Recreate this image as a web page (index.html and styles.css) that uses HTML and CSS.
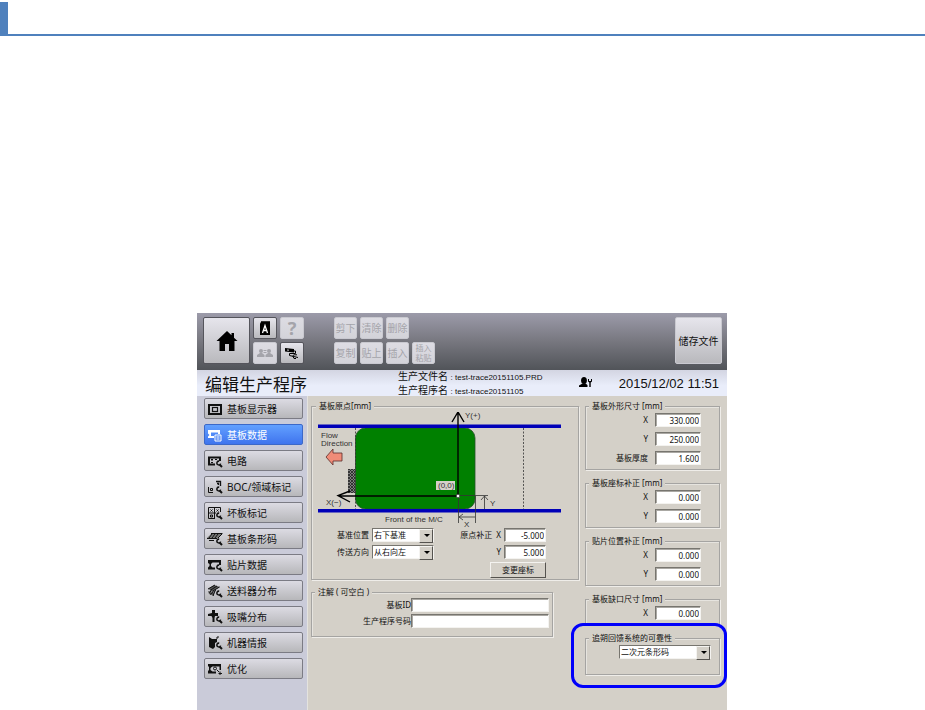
FILE: index.html
```html
<!DOCTYPE html>
<html lang="zh-CN">
<head>
<meta charset="utf-8">
<title>编辑生产程序</title>
<link rel="stylesheet" href="styles.css">
</head>
<body>
<svg class="defs" aria-hidden="true">
  <symbol id="wrench" viewBox="0 0 8 8"><path d="M4.200 1.200A1.900 1.900 0 1 0 5.600 3.600" fill="none" stroke="currentColor" stroke-width="1.500"/><path d="M4.500 4.500L7 7" stroke="currentColor" stroke-width="1.900"/></symbol>
</svg>
<header class="page-head"></header>
<main class="page">
  <div class="app">
    <div class="toolbar">
      <button class="btn home" aria-label="主页"><svg viewBox="0 0 22 22"><path d="M11 1L0.500 11H3.500V21H9V14H13V21H18.500V11H21.500L18 7.700V3H15.500V5.300Z" fill="#000"/></svg></button>
      <div class="icon-grid">
        <button class="btn" aria-label="语言"><svg viewBox="0 0 14 14"><path d="M3 0H12V2H3Z" fill="#333"/><path d="M2 2.500L3 1H12V14H2Z" fill="#000"/><path d="M4.500 12L7 4.500L9.500 12M5.300 9.500H8.700" fill="none" stroke="#fff" stroke-width="1.300"/></svg></button>
        <button class="btn off help" disabled>?</button>
        <button class="btn off" disabled aria-label="用户"><svg viewBox="0 0 16 14" fill="#a4a4aa"><circle cx="4" cy="5" r="2"/><path d="M0 11V9L3 7H5L7.500 9V11Z"/><circle cx="12" cy="5" r="2"/><path d="M8.500 11V9L11 7H13L16 9V11Z"/><path d="M6.500 4H9.500V5H6.500ZM6.500 6H9.500V7H6.500Z"/></svg></button>
        <button class="btn" aria-label="USB"><svg viewBox="0 0 16 14"><path d="M1 2L10 3V6.500L1 5.500Z" fill="#000"/><path d="M3 4L5 4.200" stroke="#ccc"/><path d="M10 5H11.500V7.500H5.500V9.500L14 11.500M8.500 10L10 8.800H13M9 10.500L10 12.500H12" fill="none" stroke="#000"/></svg></button>
      </div>
      <div class="edit-grid">
        <button class="btn off" disabled>剪下</button>
        <button class="btn off" disabled>清除</button>
        <button class="btn off" disabled>删除</button>
        <button class="btn off row2" disabled>复制</button>
        <button class="btn off" disabled>贴上</button>
        <button class="btn off" disabled>插入</button>
        <button class="btn off two-line" disabled>插入<br>粘贴</button>
      </div>
      <button class="btn save">储存文件</button>
    </div>

    <div class="titlebar">
      <h1>编辑生产程序</h1>
      <div class="file-info">
        <div>生产文件名 <span>: test-trace20151105.PRD</span></div>
        <div>生产程序名 <span>: test-trace20151105</span></div>
      </div>
      <svg class="user" viewBox="0 0 14 12"><ellipse cx="5" cy="3.500" rx="2.900" ry="3.500"/><path d="M0 10V8.500L3.500 6.500H6.500L8.500 8V10Z"/><path d="M9 2V4.500L10.300 5.500V10H11.700V5.500L13 4.500V2H12V4H10V2Z"/></svg>
      <time>2015/12/02 11:51</time>
    </div>

    <div class="body">
      <nav class="side">
        <button class="item"><svg viewBox="0 0 16 14"><path d="M2 3H14V12H2Z" fill="none" stroke="currentColor" stroke-width="2"/><rect x="5.500" y="5.500" width="5" height="4" fill="none" stroke="currentColor" stroke-width="1.200"/></svg>基板显示器</button>
        <button class="item current"><svg viewBox="0 0 16 14"><path d="M1 2H13V6H11V4.500H4V8H7V10H1V8.500L2.500 7L1 5.500Z" fill="currentColor"/><path d="M8 7H14V13H8ZM9.500 9H12.500M9.500 11H12.500" fill="none" stroke="currentColor"/></svg>基板数据</button>
        <button class="item"><svg viewBox="0 0 16 14"><path d="M8 10.500H2V3.500H13V7" fill="none" stroke="currentColor" stroke-width="2"/><path d="M4 5H6V6.500H4ZM4 8H6V9H4ZM8 5H10V6H8Z" fill="currentColor"/><use href="#wrench" x="8" y="6" width="8" height="8"/></svg>电路</button>
        <button class="item"><svg viewBox="0 0 16 14"><path d="M1.500 7V12.500H6M3.500 8.500H5.500V10.500H3.500Z" fill="none" stroke="currentColor"/><path d="M9 1.500H13.500V6M10 3.500H11.500V5" fill="none" stroke="currentColor" stroke-width="1.300"/><use href="#wrench" x="8" y="6" width="8" height="8"/></svg>BOC/领域标记</button>
        <button class="item"><svg viewBox="0 0 16 14"><path d="M8 12.500H1.500V1.500H13.500V6M1.500 7H9M7.500 1.500V12.500M3.500 3.500L5.500 5.500M5.500 3.500L3.500 5.500M9.500 3.500L11.500 5.500M11.500 3.500L9.500 5.500M3.500 9H5.500V11H3.500Z" fill="none" stroke="currentColor"/><use href="#wrench" x="8" y="6" width="8" height="8"/></svg>坏板标记</button>
        <button class="item"><svg viewBox="0 0 16 14"><path d="M4 2H15L11 6H0Z" fill="#777"/><path d="M4 1.500H15.500M0 6.500H10M5 2L2 6M8 2L5 6M11 2L8 6M15 2L11 6" stroke="currentColor"/><path d="M2 8.500H7" stroke="currentColor"/><use href="#wrench" x="8" y="6" width="8" height="8"/></svg>基板条形码</button>
        <button class="item"><svg viewBox="0 0 16 14"><path d="M1 2H14V7H12V4.500H5.500L4 6V8L5.500 9.500H8V11.500H1V9.500L2.500 8V6L1 5Z" fill="currentColor"/><use href="#wrench" x="8" y="6" width="8" height="8"/></svg>贴片数据</button>
        <button class="item"><svg viewBox="0 0 16 14"><path d="M1 5L7 1L13 3L6 7ZM1 7L7 9V12L2 10Z" fill="#555"/><path d="M1 5L8 1M3 6.500L10 2M5 7.500L12.500 3M2 8.500L5 6.500M3 10.500L9 6M6 12L8 7" stroke="currentColor"/><use href="#wrench" x="8" y="6" width="8" height="8"/></svg>送料器分布</button>
        <button class="item"><svg viewBox="0 0 16 14"><path d="M5 0H8V3H11V6H8L7.500 8V12H5.500V8L4.500 6H1V4L5 3Z" fill="currentColor"/><use href="#wrench" x="8" y="6" width="8" height="8"/></svg>吸嘴分布</button>
        <button class="item"><svg viewBox="0 0 16 14"><path d="M2 1L5 3H10V6L8 7V11L6 13L2 11Z" fill="currentColor"/><path d="M10 3V1H12" fill="none" stroke="currentColor"/><use href="#wrench" x="8" y="6" width="8" height="8"/></svg>机器情报</button>
        <button class="item"><svg viewBox="0 0 16 14"><path d="M1 2H14V8H12.500V4.500H5.500L3.500 6V8L5.500 9.500H9V11.500H1V9L2 8V5L1 4Z" fill="currentColor"/><circle cx="8" cy="6.500" r="1.500" fill="none" stroke="currentColor"/><path d="M10 8L12 10M13 9.500V13M11.500 11.500H15" stroke="currentColor"/></svg>优化</button>
      </nav>

      <div class="content">
        <div class="col">
          <fieldset class="group origin-group">
            <legend>基板原点[mm]</legend>
            <svg class="diagram" viewBox="0 0 265 116" role="img" aria-label="基板原点示意图">
              <defs><pattern id="hatch" width="3" height="3" patternUnits="userSpaceOnUse"><rect width="3" height="3" fill="#808080"/><path d="M0 0L3 3M3 0L0 3" stroke="#222" stroke-width=".8"/></pattern></defs>
              <rect x="42.500" y="16" width="119.500" height="81" rx="10" fill="#008000" stroke="#24502a" stroke-width=".8"/>
              <path d="M42.500 16V97M210.500 16V97" stroke="#333" stroke-dasharray="2 1.500" stroke-width=".8"/>
              <rect x="5" y="12.500" width="243" height="3.500" fill="#0000b8"/>
              <rect x="5" y="97" width="243" height="3.500" fill="#0000b8"/>
              <rect x="35" y="57" width="7" height="24" fill="url(#hatch)"/>
              <path d="M13 45L20 37V41H29V49H20V53Z" fill="#f08c78" stroke="#5c2c28" stroke-width=".8"/>
              <g fill="none" stroke="#000" stroke-width="1.400"><path d="M145 84V1M139 10L145 0L151 10"/><path d="M145 84H26M37 79L25 83.500L37 90"/></g>
              <g fill="none" stroke="#333" stroke-width=".8"><path d="M145.500 84V111M162.500 84V111M146 105H162M150 102L146 105L150 108"/><path d="M145 83.500H175M171.500 84V97M168 88L171.500 84L175 88"/></g>
              <rect x="143.500" y="82.500" width="3" height="3" fill="#fff" stroke="#333" stroke-width=".6"/>
              <rect x="123" y="69" width="19" height="9" fill="#d4d0c8"/>
              <g class="diagram-text"><text x="8" y="26">Flow</text><text x="8" y="34">Direction</text><text x="13" y="93">X(−)</text><text x="72" y="110">Front of the M/C</text><text x="152" y="6">Y(+)</text><text x="125" y="76">(0,0)</text><text x="151" y="115">X</text><text x="177" y="94">Y</text></g>
            </svg>
            <div class="origin">
              <label for="pos">基准位置</label>
              <span class="combo"><select id="pos"><option>右下基准</option></select></span>
              <label for="ox">原点补正&nbsp; X</label>
              <input id="ox" type="text" value="-5.000">
              <label for="dir">传送方向</label>
              <span class="combo"><select id="dir"><option>从右向左</option></select></span>
              <label for="oy">Y</label>
              <input id="oy" type="text" value="5.000">
              <button class="classic">变更座标</button>
            </div>
          </fieldset>
          <fieldset class="group notes">
            <legend>注解 ( 可空白 )</legend>
            <div class="note-grid">
              <label for="bid">基板ID</label><input id="bid" type="text">
              <label for="pno">生产程序号码</label><input id="pno" type="text">
            </div>
          </fieldset>
        </div>

        <div class="col right">
          <fieldset class="group">
            <legend>基板外形尺寸 [mm]</legend>
            <div class="fields">
              <label for="sx">X</label><input id="sx" type="text" value="330.000">
              <label for="sy">Y</label><input id="sy" type="text" value="250.000">
              <label for="st">基板厚度</label><input id="st" type="text" value="1.600">
            </div>
          </fieldset>
          <fieldset class="group">
            <legend>基板座标补正 [mm]</legend>
            <div class="fields">
              <label for="cx">X</label><input id="cx" type="text" value="0.000">
              <label for="cy">Y</label><input id="cy" type="text" value="0.000">
            </div>
          </fieldset>
          <fieldset class="group">
            <legend>贴片位置补正 [mm]</legend>
            <div class="fields">
              <label for="px">X</label><input id="px" type="text" value="0.000">
              <label for="py">Y</label><input id="py" type="text" value="0.000">
            </div>
          </fieldset>
          <fieldset class="group">
            <legend>基板缺口尺寸 [mm]</legend>
            <div class="fields">
              <label for="nx">X</label><input id="nx" type="text" value="0.000">
            </div>
          </fieldset>
          <div class="marked">
            <fieldset class="group trace">
              <legend>追朔回馈系统的可靠性</legend>
              <span class="combo"><select aria-label="追朔回馈系统的可靠性"><option>二次元条形码</option></select></span>
            </fieldset>
            <div class="callout"></div>
          </div>
        </div>
      </div>
    </div>
  </div>
</main>
</body>
</html>
```
FILE: styles.css
```css
* { box-sizing: border-box; }

body {
  margin: 0;
  background: #fff;
  color: #111;
  font-family: "Noto Sans", "Noto Sans CJK SC", sans-serif;
  font-size: 8px;
  line-height: 12px;
  display: flex;
  flex-direction: column;
  min-height: 100vh;
}

button, input, select { font: inherit; color: inherit; margin: 0; padding: 0; border-radius: 0; }
.defs { position: absolute; width: 0; height: 0; }

.page-head {
  height: 36px;
  border-bottom: 2px solid #4f81bd;
  padding-top: 2px;
}
.page-head::before {
  content: "";
  display: block;
  width: 8px;
  height: 100%;
  background: #4f81bd;
}

.page {
  flex: 1;
  display: flex;
  padding: 277px 198px 0 197px;
}
.app {
  flex: 1;
  display: flex;
  flex-direction: column;
  background: #d4d0c8;
}

/* Toolbar */
.toolbar {
  display: flex;
  align-items: flex-start;
  height: 57px;
  padding: 4px 5px 0 6px;
  background: linear-gradient(#9c9baa, #77777f 50%, #515459);
}
.btn {
  display: flex;
  align-items: center;
  justify-content: center;
  font-size: 10px;
  line-height: 12px;
  border: 1px solid #55555c;
  border-radius: 2px;
  background: linear-gradient(#e6e5ec, #b9b9bd);
}
.btn.off {
  color: #a4a4aa;
  border-color: #c9c9d0;
  background: linear-gradient(#dddce3, #d3d3d9);
}
.btn svg { width: 16px; height: 14px; }
.btn.home svg { width: 22px; height: 22px; }
.home { width: 47px; height: 47px; }
.icon-grid, .edit-grid {
  display: grid;
  grid-auto-rows: 22px;
  gap: 3px;
}
.icon-grid { grid-template-columns: 24px 24px; margin-left: 3px; }
.edit-grid { grid-template-columns: repeat(4, 23px); margin-left: 30px; }
.row2 { grid-column: 1; }
.btn.help { font-size: 18px; font-weight: bold; line-height: 18px; }
.btn.two-line { font-size: 8px; line-height: 10px; }
.save { width: 47px; height: 47px; margin-left: auto; border-color: #c9c9d0; }

/* Title bar */
.titlebar {
  display: flex;
  align-items: center;
  height: 26px;
  padding: 0 8px;
  background: linear-gradient(#d3d5e2, #e9edfa 60%);
}
.titlebar h1 {
  margin: 0;
  font-size: 17px;
  font-weight: normal;
  line-height: 26px;
  padding-top: 4px;
}
.file-info { margin-left: 91px; padding-top: 1px; font-size: 10px; line-height: 13px; white-space: nowrap; }
.file-info span { font-family: "Liberation Sans", sans-serif; font-size: 8px; }
.user { width: 14px; height: 12px; margin: 0 0 0 36px; }
.titlebar time {
  margin-left: auto;
  padding-top: 2px;
  font-family: "Liberation Sans", sans-serif;
  font-size: 13px;
  line-height: 24px;
}

/* Body */
.body { flex: 1; display: flex; }
.side {
  width: 111px;
  flex: none;
  display: flex;
  flex-direction: column;
  gap: 5px;
  padding: 2px 4px 2px 7px;
  background: #cacbd9;
  border-right: 1px solid #e4e3df;
}
.item {
  display: flex;
  align-items: center;
  gap: 4px;
  height: 21px;
  padding: 0 2px;
  border: 1px solid #7b7b84;
  border-radius: 2px;
  background: linear-gradient(#dcdbe3, #b7b7ba);
  font-size: 10px;
  white-space: nowrap;
}
.item svg { width: 16px; height: 14px; flex: none; }
.item.current {
  color: #fff;
  border-color: #3c68c8;
  background: linear-gradient(#62a0ff, #3f74ee);
}

.content {
  flex: 1;
  display: flex;
  gap: 5px;
  padding: 4px 6px 0 3px;
}
.col { flex: 1; display: flex; flex-direction: column; gap: 5px; }
.col.right { flex: none; width: 136px; gap: 6px; }

.group {
  min-width: 0;
  margin: 0 1px 1px 0;
  padding: 1px 0 4px;
  border: 1px solid #a5a4a2;
  box-shadow: 1px 1px #efede9, inset 1px 1px #e6e4df;
}
.group legend {
  margin-left: 3px;
  padding: 0 3px;
  height: 12px;
  white-space: nowrap;
  background: #d4d0c8;
}
.group label { text-align: right; white-space: nowrap; }

input {
  width: 100%;
  height: 14px;
  min-width: 0;
  border: 1px solid;
  border-color: #77756f #f4f3f0 #f4f3f0 #77756f;
  box-shadow: inset 1px 1px #aaa8a3;
  background: #fff;
  text-align: right;
  padding: 0 1px;
  outline: none;
}

.combo { position: relative; display: block; height: 14px; }
.combo select {
  appearance: none;
  display: block;
  width: 100%;
  height: 14px;
  line-height: 12px;
  padding: 0 14px 0 1px;
  border: 1px solid;
  border-color: #77756f #f4f3f0 #f4f3f0 #77756f;
  background: #fff;
}
.combo::before {
  content: "";
  position: absolute;
  right: 1px;
  top: 1px;
  width: 12px;
  height: 12px;
  border: 1px solid;
  border-color: #f4f3f0 #55534f #55534f #f4f3f0;
  background: #d4d0c8;
  pointer-events: none;
}
.combo::after {
  content: "";
  position: absolute;
  right: 4px;
  top: 6px;
  border: 3px solid transparent;
  border-top-color: #000;
  border-bottom: 0;
  pointer-events: none;
}

.origin-group { padding: 0 0 1px 1px; }
.diagram { display: block; width: 100%; height: auto; }
.diagram-text { font-family: "Liberation Sans", sans-serif; font-size: 8px; fill: #333; }

.origin {
  display: grid;
  grid-template-columns: 56px 62px 1fr 42px;
  gap: 3px;
  align-items: center;
  padding-right: 32px;
}
.classic {
  grid-column: 3 / 5;
  justify-self: end;
  width: 56px;
  height: 16px;
  line-height: 12px;
  border: 1px solid;
  border-color: #f4f3f0 #55534f #55534f #f4f3f0;
  background: #d4d0c8;
}

.notes { margin-right: 27px; padding: 0 3px 8px 0; }
.note-grid {
  display: grid;
  grid-template-columns: 99px 1fr;
  row-gap: 2px;
  align-items: center;
}

.fields {
  display: grid;
  grid-template-columns: 1fr 46px;
  gap: 5px 7px;
  align-items: center;
  padding-right: 18px;
}

.marked { position: relative; }
.trace { padding: 1px 8px 15px 33px; }
.trace legend { margin-left: -30px; }
.callout {
  position: absolute;
  inset: -9px -6px -12px -14px;
  border: 3px solid #0000fa;
  border-radius: 12px;
  pointer-events: none;
}
```
